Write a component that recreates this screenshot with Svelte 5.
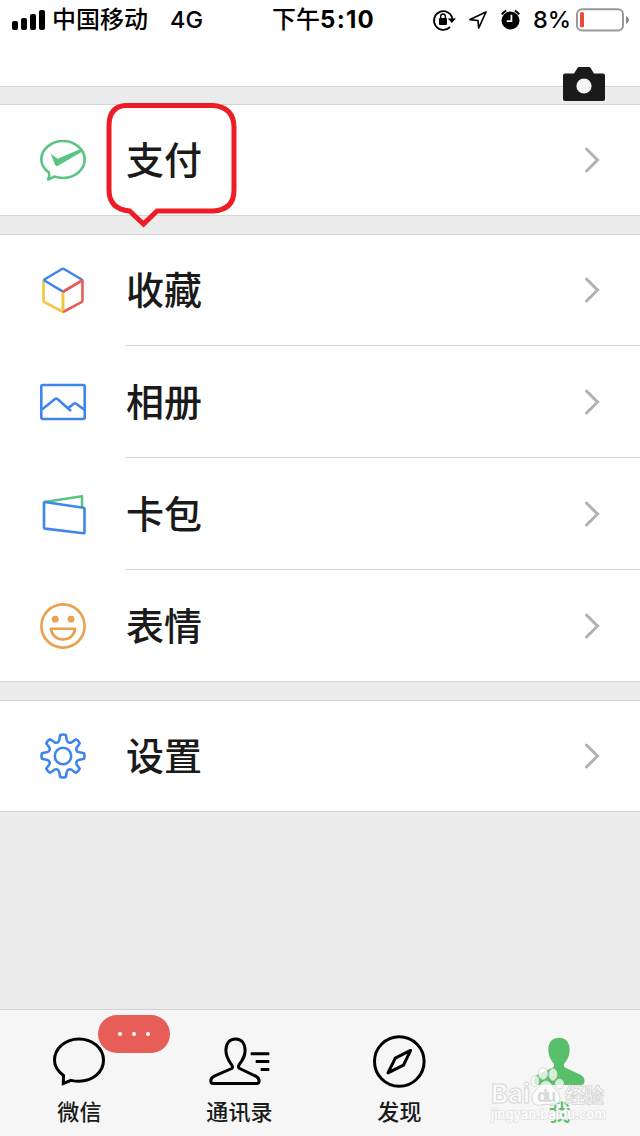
<script lang="ts">
	// Menu rows, one array per block
	const groups = [
		[{ icon: 'pay', label: '支付', marked: true }],
		[
			{ icon: 'favorites', label: '收藏' },
			{ icon: 'album', label: '相册' },
			{ icon: 'cards', label: '卡包' },
			{ icon: 'stickers', label: '表情' }
		],
		[{ icon: 'settings', label: '设置' }]
	];

	const tabs = [
		{ icon: 'chats', label: '微信', badge: '···' },
		{ icon: 'contacts', label: '通讯录' },
		{ icon: 'discover', label: '发现' },
		{ icon: 'me', label: '我', active: true }
	];
</script>

<div class="screen">
	<header>
		<div class="status">
			<svg class="signal" width="34" height="20" viewBox="0 0 34 20">
				<rect x="0" y="11" width="6" height="9" rx="2" />
				<rect x="9" y="8" width="6" height="12" rx="2" />
				<rect x="18" y="4" width="6" height="16" rx="2" />
				<rect x="27" y="0" width="6" height="20" rx="2" />
			</svg>
			<span class="carrier">中国移动</span>
			<span class="network">4G</span>
			<span class="time">下午<b>5:10</b></span>
			<svg class="indicators" width="90" height="24" viewBox="0 0 90 24">
				<path d="M18 19A9.300 9.300 0 1 1 20.500 11" fill="none" stroke="#000" stroke-width="1.8" />
				<path d="M15.700 10.500h8.300L19.800 15z" />
				<rect x="7" y="10" width="8" height="7" rx="1" />
				<path d="M8.700 10.500V8.300a2.300 2.300 0 0 1 4.600 0v2.200" fill="none" stroke="#000" stroke-width="1.4" />
				<path d="M38 11.600 54 4 46.700 20 46 12.500z" fill="none" stroke="#000" stroke-width="1.700" stroke-linejoin="round" />
				<circle cx="78.500" cy="12.500" r="9" />
				<path d="M69.800 6.300a14 14 0 0 1 4.400-3.700M87.200 6.300a14 14 0 0 0-4.400-3.700" fill="none" stroke="#000" stroke-width="2" />
				<path d="M79.400 6.800v6.300h-4.700" fill="none" stroke="#fff" stroke-width="1.800" />
			</svg>
			<span class="percent">8%</span>
			<svg class="battery" width="54" height="24" viewBox="0 0 54 24">
				<rect x="1" y="1.200" width="46" height="21.300" rx="5" fill="#fff" stroke="#999" stroke-width="2" />
				<rect x="4" y="4.300" width="4" height="15" rx="1" fill="#e74c3c" />
				<path d="M50 8q3 1.500 3 4t-3 4z" fill="#888" />
			</svg>
		</div>
		<svg class="camera" width="42" height="34" viewBox="0 0 42 34">
			<path d="M2 6.500h9L14.500 1q.6-1 1.500-1h10q1 0 1.600 1L31 6.500h9q2 0 2 2V32q0 2-2 2H2q-2 0-2-2V8.500q0-2 2-2z" fill="#1a1a1a" />
			<circle cx="21" cy="19" r="7.600" fill="#f5f5f5" />
		</svg>
	</header>

	<main>
		{#each groups as group}
			<ul class="group">
				{#each group as item}
					<li class="row">
						<svg class="icon" width="48" height="48" viewBox="0 0 48 48">
							{#if item.icon === 'pay'}
								<path d="M10 36.500C5 33 2.300 28.500 2.300 23.500 2.300 13.500 12 5 24 5s21.700 8.500 21.700 18.500S36 42 24 42q-4.500 0-8.500-1.400L9 43.500q1.800-3.500 1-7z" stroke="#59c581" />
								<path d="M11.500 17.500q4 3.300 7 5.200L42.300 12.800l1.500 2.400L19 29.800q-2 1-2.800-.8z" fill="#59c581" />
							{:else if item.icon === 'favorites'}
								<path d="M4.500 14.500V34.500q0 1 1 1.600L24 46V26" stroke="#f6c543" />
								<path d="M24 46l18.500-9.900q1-.6 1-1.600V14.500L24 26" stroke="#e75e58" />
								<path d="M4.500 14 23 3q1-.6 2 0L43.500 14 M4.500 14 24 25.700" stroke="#3f86ec" />
								<path d="M24 25.700 43.500 14" stroke="#e75e58" />
								<path d="M24 27v18" stroke="#f6c543" />
							{:else if item.icon === 'album'}
								<g stroke="#3f86ec">
									<rect x="2.300" y="7" width="43.400" height="34" rx="1.500" />
									<path d="M3 31.500 16 21q1.200-.9 2.400 0L32 33M28 31l6.800-5.300q1.200-.9 2.400 0L45 31.500" />
								</g>
							{:else if item.icon === 'cards'}
								<path d="M5.500 12 43 6.200V17" stroke="#59c581" />
								<path d="M5.500 12q-.5 0-.5 1V37.500q0 1 1 1.100L44.500 43.300q1 .1 1-1V19q0-1-1-1.200z" stroke="#3f86ec" />
							{:else if item.icon === 'stickers'}
								<g stroke="#eba04f">
									<circle cx="24" cy="24" r="21.600" />
									<path d="M11.800 26.700h24.400c-.8 6.600-5.800 10.800-12.200 10.800s-11.400-4.200-12.200-10.800z" />
								</g>
								<circle cx="16.200" cy="17.200" r="3.400" fill="#eba04f" />
								<circle cx="32" cy="17.200" r="3.400" fill="#eba04f" />
							{:else}
								<g stroke="#3f86ec">
									<circle cx="24" cy="24" r="8.200" />
									<path d="M21.200 3q2.800-1 5.600 0l1.100 5.500q.4 1.400 1.800 2 1.500.6 2.700-.2L37 7.400q2.500 1.200 3.700 3.800l-3 4.500q-.8 1.300-.2 2.700.6 1.400 2 1.700L45 21.200q1 2.800 0 5.600l-5.500 1.100q-1.400.4-2 1.800-.6 1.400.2 2.700l3 4.400q-1.200 2.700-3.900 3.900l-4.400-3q-1.300-.8-2.700-.2-1.400.6-1.800 2L26.800 45q-2.800 1-5.600 0l-1.100-5.500q-.4-1.400-1.800-2-1.400-.6-2.700.2l-4.400 3q-2.700-1.200-3.900-3.900l3-4.400q.8-1.300.2-2.700-.6-1.400-2-1.800L3 26.800q-1-2.800 0-5.600l5.500-1.100q1.400-.4 2-1.800.6-1.400-.2-2.700l-3-4.400q1.200-2.700 3.900-3.900l4.400 3q1.300.8 2.700.2 1.400-.6 1.800-2z" />
								</g>
							{/if}
						</svg>
						<div class="content">
							<span class="label">{item.label}</span>
							<svg class="chevron" width="18" height="28" viewBox="0 0 18 28">
								<path d="M2.500 3 13.500 14 2.500 25" />
							</svg>
						</div>
						{#if item.marked}
							<svg class="callout" width="134" height="128" viewBox="0 0 134 128">
								<path d="M20 4.500H108Q129 6 129 27V89Q129 109 108 110H52L38.500 123 24.500 110Q4 108 4 89V25Q4 6 20 4.500z" />
							</svg>
						{/if}
					</li>
				{/each}
			</ul>
		{/each}
	</main>

	<nav>
		{#each tabs as tab}
			<div class="tab" class:active={tab.active}>
				<svg width="64" height="56" viewBox="0 0 64 56">
					{#if tab.icon === 'chats'}
						<path d="M16.500 45.500C10.500 41 7.500 36 7.500 30.300 7.500 18.500 18.300 8.900 32 8.900s24.500 9.600 24.500 21.400S45.700 51.300 32 51.300q-4 0-8-.9L16.300 53.500z" />
					{:else if tab.icon === 'contacts'}
						<g transform="translate(-1.300 0)">
							<path d="M26 38.500 8.500 46.200q-3.400 1.600-3.400 4.800 0 2.500 2.500 2.500h43.300q2.500 0 2.500-2.500 0-3.200-3.400-4.800L34 38.500c-1.500-1-1.500-2.200-.6-3.800 3.300-4.500 6-7.700 6-14.200C39.400 13.500 36 9 29.800 9S20.200 13.500 20.200 20.500c0 6.500 2.600 9.700 5.600 14.200 1.100 1.600 1.500 2.800.2 3.800z" />
							<path d="M45 23.700h18.600M50 31.600h13.600M55 39.600h8.600" />
						</g>
					{:else if tab.icon === 'discover'}
						<circle cx="32.300" cy="31.500" r="24.800" />
						<path d="M43.600 20.400 28.300 28.200 21 42.900 36.500 35.100z" stroke-linejoin="round" />
					{:else}
						<path class="solid" d="M32 7.800c6.500 0 10.600 4.200 10.600 11.600 0 7-2.600 10.500-5 13.600-1.100 1.800-1 3.300.8 4.700L53.500 44.700Q57.500 46.800 57.500 50.700 57.500 55 54 55H10Q6.500 55 6.500 50.700 6.500 46.800 10.500 44.700L25.600 37.700c1.800-1.400 1.900-2.900.8-4.700-2.400-3.100-5-6.600-5-13.600C21.400 12 25.500 7.800 32 7.800z" />
					{/if}
				</svg>
				<span class="name">{tab.label}</span>
				{#if tab.badge}
					<i class="badge">{#each tab.badge as _}<em></em>{/each}</i>
				{/if}
			</div>
		{/each}
	</nav>

	<svg class="watermark" width="130" height="64" viewBox="0 0 130 64">
		<g fill="#fff" fill-opacity=".75" stroke="#d8d8d8">
			<text x="4" y="42" font-size="26" font-weight="700" textLength="39">Bai</text>
			<path d="M45 37c0-7 6-8 9-14 3-4 7-4 10 0 3 5 9 8 9 14 0 6-5 8-9 7q-5-1.500-10 0c-4 1-9-1-9-7z" />
			<ellipse cx="48" cy="20" rx="4" ry="5.500" />
			<ellipse cx="56" cy="12.500" rx="4.500" ry="5.800" />
			<ellipse cx="66" cy="13.500" rx="4" ry="5.800" />
			<ellipse cx="72.500" cy="23" rx="4.200" ry="5" />
			<text x="78" y="42" font-size="20" font-weight="700" textLength="39">经验</text>
		</g>
		<text x="50" y="41" font-size="17" font-weight="700" fill="#dadada" textLength="19">du</text>
		<text class="url" x="4" y="58" font-size="13" textLength="115">jingyan.baidu.com</text>
	</svg>
</div>

<style>
	:global(body) {
		margin: 0;
		background: #ececec;
	}

	.screen {
		position: relative;
		display: flex;
		flex-direction: column;
		width: 640px;
		height: 1136px;
		overflow: hidden;
		background: #ececec;
		color: #1a1a1a;
		font-family: Inter, "Noto Sans CJK SC", sans-serif;
		font-weight: 500;
	}

	svg {
		display: block;
		flex: none;
		overflow: visible;
	}

	header {
		position: relative;
		box-sizing: border-box;
		height: 87px;
		background: #fff;
		border-bottom: 1px solid #d5d5d5;
	}

	.status {
		display: flex;
		align-items: center;
		height: 40px;
		padding-left: 12px;
		color: #000;
		font-size: 24px;
		line-height: 42px;
		white-space: nowrap;
	}

	.carrier {
		width: 97px;
		margin-left: 6px;
	}

	.network {
		width: 36px;
		margin-left: 21px;
		font-size: 23.5px;
	}

	.time {
		width: 104px;
		margin-left: 66px;
	}

	.time b {
		letter-spacing: 1.3px;
	}

	.indicators {
		margin-left: 56px;
	}

	.percent {
		width: 38px;
		margin-left: 11px;
		font-size: 23.5px;
	}

	.battery {
		margin-left: 5px;
	}

	.camera {
		position: absolute;
		top: 67px;
		left: 563px;
	}

	main {
		flex: 1;
		padding-top: 17px;
	}

	.group {
		margin: 0 0 18px;
		padding: 0;
		list-style: none;
		background: #fff;
		border: solid #d5d5d5;
		border-width: 1px 0;
	}

	.row {
		position: relative;
		display: flex;
		align-items: center;
		height: 111px;
		padding-left: 39px;
	}

	.row:first-child {
		height: 110px;
	}

	.row + .row {
		border-top: 1px solid transparent;
	}

	.icon {
		fill: none;
		stroke-width: 2.6;
		stroke-linejoin: round;
	}

	.content {
		display: flex;
		flex: 1;
		align-items: center;
		justify-content: space-between;
		align-self: stretch;
		margin-left: 39px;
		padding-right: 38px;
		font-size: 38px;
	}

	.row + .row .content {
		margin-top: -1px;
		border-top: 1px solid #d5d5d5;
	}

	.label {
		padding-bottom: 5px;
	}

	.chevron {
		fill: none;
		stroke: #b2b2b2;
		stroke-width: 3;
		stroke-linecap: round;
	}

	.callout {
		position: absolute;
		top: -4px;
		left: 105px;
		z-index: 1;
		fill: none;
		stroke: #ee1c24;
		stroke-width: 5;
	}

	nav {
		display: grid;
		grid-template-columns: repeat(4, 160px);
		box-sizing: border-box;
		height: 127px;
		background: #f6f6f6;
		border-top: 1px solid #d2d2d2;
	}

	.tab {
		position: relative;
		display: flex;
		flex-direction: column;
		align-items: center;
		padding-top: 20px;
		font-size: 22px;
		line-height: 32px;
	}

	.tab svg {
		margin: 0 0 10px -2px;
		fill: none;
		stroke: #000;
		stroke-width: 3;
	}

	.tab .solid {
		fill: #58bf6a;
		stroke: none;
	}

	.name {
		margin-left: -1px;
		letter-spacing: 0.2px;
	}

	.active {
		color: #58bf6a;
	}

	.badge {
		position: absolute;
		top: 5px;
		left: 98px;
		display: flex;
		align-items: center;
		justify-content: center;
		gap: 10px;
		width: 72px;
		height: 38px;
		border-radius: 19px;
		background: #e75e58;
	}

	.badge em {
		width: 4px;
		height: 4px;
		border-radius: 50%;
		background: #fff;
	}

	.watermark {
		position: absolute;
		top: 1061px;
		left: 487px;
	}

	.url {
		fill: #fff;
		stroke: #e2e2e2;
		stroke-width: 1.6;
		paint-order: stroke;
	}
</style>
